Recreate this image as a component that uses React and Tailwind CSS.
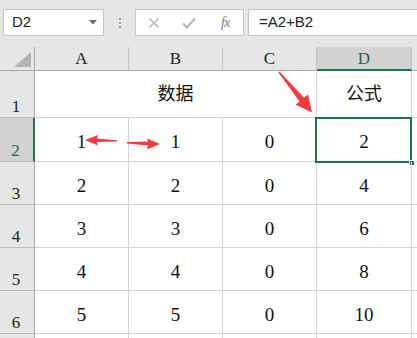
import React from "react";

const serif = "font-['Liberation_Serif','Noto_Sans_CJK_SC',serif]";

const rows = [
  { n: 2, h: "h-[44px]", a: "1", b: "1", c: "0", d: "2", active: true },
  { n: 3, h: "h-[43px]", a: "2", b: "2", c: "0", d: "4" },
  { n: 4, h: "h-[43px]", a: "3", b: "3", c: "0", d: "6" },
  { n: 5, h: "h-[43px]", a: "4", b: "4", c: "0", d: "8" },
  { n: 6, h: "h-[43px]", a: "5", b: "5", c: "0", d: "10" },
];

function RowHead({ n, h, active }) {
  return (
    <div
      className={`${h} flex items-end justify-center pb-[1px] pr-[2px] text-[17px] leading-none border-b border-[#bcbcbc] ${
        active
          ? "bg-[#d2d2d2] text-[#1f6b44] border-r-2 border-r-[#217346]"
          : "bg-[#e6e6e6] text-[#222] border-r border-r-[#a8a8a8]"
      }`}
    >
      <span className="translate-y-[-1px]">{n}</span>
    </div>
  );
}

function Cell({ h, children, extra = "" }) {
  return (
    <div
      className={`${h} flex items-center justify-center pt-[4px] text-[19px] leading-none text-[#111] border-b border-r border-[#d4d4d4] ${extra}`}
    >
      {children}
    </div>
  );
}

export default function App() {
  return (
    <div className={`relative w-[417px] h-[338px] overflow-hidden bg-white ${serif}`}>
      {/* formula bar */}
      <div className="h-[47px] bg-[#e6e6e6] flex items-start pt-[9px] pl-[3px] font-['Liberation_Sans',sans-serif]">
        <div className="shrink-0 w-[101px] h-[27px] bg-white border border-[#c6c6c6] flex items-center pl-[8px] pr-[6px] text-[15px] text-[#222]">
          <span className="flex-1">D2</span>
          <svg width="8" height="5" viewBox="0 0 8 5">
            <polygon points="0,0 8,0 4,4.5" fill="#6b6b6b" />
          </svg>
        </div>
        <div className="shrink-0 w-[31px] h-[27px] flex flex-col items-center justify-center gap-[2px]">
          <span className="w-[2px] h-[2px] bg-[#9c9c9c]" />
          <span className="w-[2px] h-[2px] bg-[#9c9c9c]" />
          <span className="w-[2px] h-[2px] bg-[#9c9c9c]" />
        </div>
        <div className="shrink-0 w-[109px] h-[27px] bg-white border border-[#c6c6c6] flex items-center">
          <svg className="ml-[12px]" width="12" height="12" viewBox="0 0 12 12">
            <path d="M1.5 1.5 L10.5 10.5 M10.5 1.5 L1.5 10.5" stroke="#b8b8b8" strokeWidth="1.6" fill="none" />
          </svg>
          <svg className="ml-[22px]" width="14" height="12" viewBox="0 0 14 12">
            <path d="M1 6.5 L5 10.5 L13 1.5" stroke="#b8b8b8" strokeWidth="2.2" fill="none" />
          </svg>
          <span className="ml-[25px] text-[14px] italic text-[#7a7a7a] font-['Liberation_Serif',serif] tracking-[-1px]">
            fx
          </span>
        </div>
        <div className="shrink-0 ml-[4px] w-[200px] h-[27px] bg-white border border-[#c6c6c6] flex items-center pl-[10px] text-[15px] text-[#222]">
          =A2+B2
        </div>
      </div>

      {/* sheet grid */}
      <div className="grid grid-cols-[35px_94px_94px_94px_95px_1fr]">
        {/* column headers */}
        <div className="h-[24px] bg-[#e6e6e6] border-r border-b border-[#a8a8a8] flex items-end justify-end pr-[3px] pb-[3px]">
          <svg width="17" height="15" viewBox="0 0 17 15">
            <polygon points="0,15 17,15 17,0" fill="#b4b4b4" />
          </svg>
        </div>
        {["A", "B", "C"].map((c) => (
          <div
            key={c}
            className="h-[24px] bg-[#e6e6e6] border-r border-r-[#c4c4c4] border-b border-b-[#a8a8a8] flex items-end justify-center pb-[3px] text-[17px] leading-none text-[#222]"
          >
            {c}
          </div>
        ))}
        <div className="h-[24px] bg-[#d2d2d2] border-r border-r-[#c4c4c4] border-b-2 border-b-[#217346] flex items-end justify-center pb-[2px] text-[17px] leading-none text-[#1f6b44]">
          D
        </div>
        <div className="h-[24px] bg-[#e6e6e6] border-b border-b-[#a8a8a8]" />

        {/* row 1 */}
        <RowHead n={1} h="h-[47px]" />
        <div className="col-span-3 h-[47px] flex items-center justify-center text-[18px] leading-none text-[#111] border-b border-r border-[#d4d4d4]">
          数据
        </div>
        <div className="h-[47px] flex items-center justify-center text-[18px] leading-none text-[#111] border-b border-r border-[#d4d4d4]">
          公式
        </div>
        <div className="h-[47px] border-b border-[#d4d4d4]" />

        {/* rows 2-6 */}
        {rows.map((r) => (
          <React.Fragment key={r.n}>
            <RowHead n={r.n} h={r.h} active={r.active} />
            <Cell h={r.h}>{r.a}</Cell>
            <Cell h={r.h}>{r.b}</Cell>
            <Cell h={r.h}>{r.c}</Cell>
            <Cell h={r.h} extra="relative">
              {r.d}
              {r.active && (
                <>
                  <div className="absolute left-[-2px] top-[-1px] right-[-1px] bottom-[-2px] border-2 border-[#217346]" />
                  <div className="absolute right-[-4px] bottom-[-5px] w-[6px] h-[6px] bg-[#217346] border border-white" />
                </>
              )}
            </Cell>
            <div className={`${r.h} border-b border-[#d4d4d4]`} />
          </React.Fragment>
        ))}

        {/* row 7 (partly visible) */}
        <div className="h-[20px] bg-[#e6e6e6] border-r border-[#a8a8a8]" />
        <div className="h-[20px] border-r border-[#d4d4d4]" />
        <div className="h-[20px] border-r border-[#d4d4d4]" />
        <div className="h-[20px] border-r border-[#d4d4d4]" />
        <div className="h-[20px] border-r border-[#d4d4d4]" />
        <div className="h-[20px]" />
      </div>

      {/* annotation arrows */}
      <svg className="absolute inset-0 pointer-events-none" width="417" height="338" viewBox="0 0 417 338">
        <polygon points="85,140 98,135 97,138.6 117,140.2 117,141.6 97,142 98,145.5" fill="#f33d3d" />
        <polygon points="127,142 148,141.6 147,138.5 160,144 147,149.5 148,145.6 127,143.5" fill="#f33d3d" />
        <polygon points="279.6,71.6 304.1,97.8 308,94.6 312,112.5 295.6,104.8 299.5,101.6 278.4,72.4" fill="#f33d3d" />
      </svg>
    </div>
  );
}
